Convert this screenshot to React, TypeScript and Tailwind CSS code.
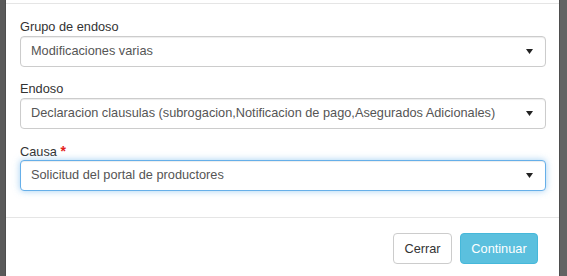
import React from "react";

function Caret() {
  return (
    <svg width="7" height="5" viewBox="0 0 7 5" className="shrink-0">
      <path d="M0 0 L7 0 L3.5 5 Z" fill="#222" />
    </svg>
  );
}

function SelectBox({ value, focused }: { value: string; focused?: boolean }) {
  return (
    <div
      className={
        focused
          ? "h-[31px] w-full flex items-center justify-between pl-[10px] pr-[12px] rounded-[4px] border border-[#66afe9] bg-white shadow-[inset_0_1px_1px_rgba(0,0,0,0.075),0_0_7px_rgba(102,175,233,0.6)]"
          : "h-[31px] w-full flex items-center justify-between pl-[10px] pr-[12px] rounded-[4px] border border-[#ccc] bg-white shadow-[inset_0_1px_1px_rgba(0,0,0,0.075)]"
      }
    >
      <span className="text-[12.75px] text-[#555] leading-none whitespace-nowrap">{value}</span>
      <Caret />
    </div>
  );
}

export default function App() {
  return (
    <div className="w-[567px] h-[276px] bg-[#5e5e5e] flex overflow-hidden font-['Liberation_Sans',Arial,sans-serif]">
      <div className="w-[5px] shrink-0 bg-[#5a5a5a]" />
      <div className="w-[555px] shrink-0 bg-white border-x border-[#4e4e4e] flex flex-col">
        <div className="h-[4px] border-b border-[#e5e5e5]" />
        <div className="pl-[14px] pr-[13px] pt-[14px] pb-[26px] flex flex-col">
          <label className="h-[18px] leading-[18px] text-[12.75px] text-[#333]">Grupo de endoso</label>
          <SelectBox value="Modificaciones varias" />
          <label className="mt-[13px] h-[18px] leading-[18px] text-[12.75px] text-[#333]">Endoso</label>
          <SelectBox value="Declaracion clausulas (subrogacion,Notificacion de pago,Asegurados Adicionales)" />
          <label className="mt-[13px] h-[18px] leading-[18px] text-[12.75px] text-[#333]">
            Causa <span className="text-[#e3201b] font-bold text-[14px]">*</span>
          </label>
          <SelectBox value="Solicitud del portal de productores" focused />
        </div>
        <div className="border-t border-[#e5e5e5] pt-[15px] pr-[21px] flex justify-end gap-[8px]">
          <button className="h-[31px] w-[59px] rounded-[4px] border border-[#ccc] bg-white text-[12.75px] text-[#333]">
            Cerrar
          </button>
          <button className="h-[31px] w-[78px] rounded-[4px] border border-[#46b8da] bg-[#5bc0de] text-[12.75px] text-white">
            Continuar
          </button>
        </div>
      </div>
      <div className="flex-1 bg-[#636363]" />
    </div>
  );
}
